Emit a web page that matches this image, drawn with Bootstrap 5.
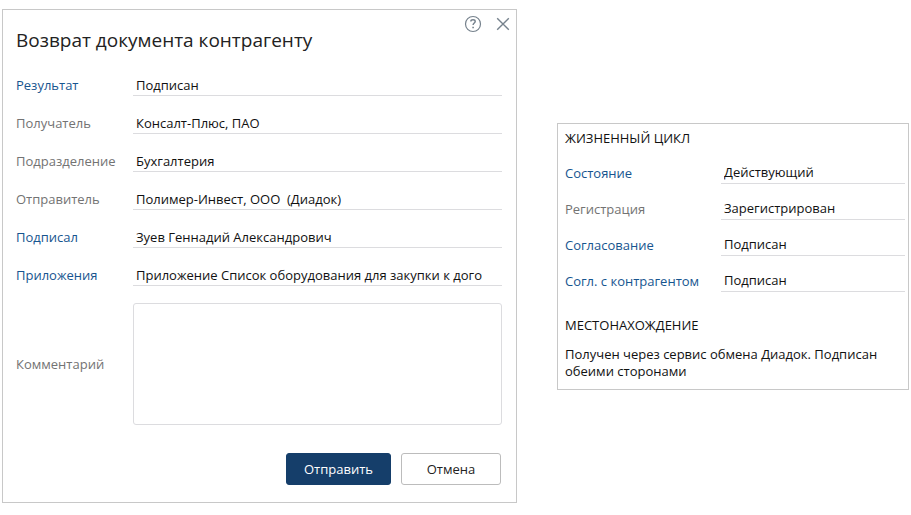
<!DOCTYPE html>
<html lang="ru">
<head>
<meta charset="utf-8">
<meta name="viewport" content="width=device-width, initial-scale=1">
<title>Возврат документа контрагенту</title>
<link href="https://cdn.jsdelivr.net/npm/bootstrap@5.3.0/dist/css/bootstrap.min.css" rel="stylesheet">
<style>
  body { font-family: "Open Sans", "Noto Sans", sans-serif; font-size: 13px; line-height: 20px; color: #111; background: #fff; }
  .page-grid { display: grid; grid-template-columns: 515fr 352fr; gap: 40px; padding: 9px 2px; }
  .panel { border: 1px solid #c8c8c8; background: #fff; }
  .dialog-head { padding: 5px 4px 0 13px; }
  .dialog-title { font-size: 19px; line-height: 28px; padding-top: 11px; color: #222; }
  .head-icons { gap: 12px; }
  .icon-btn { width: 18px; height: 18px; color: #76828d; }
  .icon-btn svg { display: block; }
  .dialog-body { padding: 20px 14px 17px 13px; }
  .stack { display: flex; flex-direction: column; gap: 16px; }
  .stack-side { gap: 14px; }
  .field-row { display: grid; grid-template-columns: 117px minmax(0, 1fr); align-items: center; }
  .stack-side .field-row { grid-template-columns: 156px minmax(0, 1fr); }
  .field-row label { color: #737373; white-space: nowrap; }
  .field-row label.active-label { color: #17558f; }
  .line-input, .line-input:focus { border: 0; border-bottom: 1px solid #dcdcdf; border-radius: 0; padding: 0 3px; height: 22px; min-height: 0; font-size: 13px; line-height: 20px; color: #111; background: transparent; }
  .comment-row { padding-top: 1px; }
  .comment-box { height: 122px; resize: none; border-color: #dcdcdf; border-radius: 3px; font-size: 13px; }
  .actions { margin-top: 28px; gap: 10px; padding-right: 1px; }
  .action-btn { height: 32px; font-size: 13px; line-height: 20px; padding: 0; border-radius: 3px; }
  .send-btn, .send-btn:hover { width: 105px; background: #153e6a; border-color: #153e6a; color: #fff; font-weight: 500; }
  .cancel-btn, .cancel-btn:hover { width: 100px; background: #fff; border-color: #bcbcbc; color: #222; }
  .side-panel { padding: 5px 3px 9px 7px; }
  .section-title { font-size: 13px; line-height: 19px; }
  .place-title { margin: 24px 0 11px; }
  .place-text { line-height: 17px; }
  @media (max-width: 767px) { .page-grid { grid-template-columns: 1fr; } }
</style>
</head>
<body>
<main class="page-grid align-items-center">
  <section class="panel" role="dialog" aria-labelledby="dialogTitle">
    <header class="dialog-head d-flex justify-content-between align-items-start">
      <h1 class="dialog-title fw-normal mb-0" id="dialogTitle">Возврат документа контрагенту</h1>
      <div class="head-icons d-flex">
        <button type="button" class="icon-btn btn p-0 border-0" aria-label="Справка">
          <svg width="18" height="18" viewBox="0 0 18 18" fill="none" stroke="currentColor"><circle cx="9" cy="9" r="7.5" stroke-width="1.2"/><path d="M6.9 6.6V6.2C6.9 5.3 7.8 4.8 9 4.8s2.2.6 2.2 1.7c0 1.5-2.1 1.6-2.1 3.5" stroke-width="1.5"/><path d="M9.1 11.7v1.6" stroke-width="1.6"/></svg>
        </button>
        <button type="button" class="icon-btn btn p-0 border-0" aria-label="Закрыть">
          <svg width="18" height="18" viewBox="0 0 18 18" fill="none" stroke="currentColor" stroke-width="1.4"><path d="M3.2 3.2l11.6 11.6M14.8 3.2L3.2 14.8"/></svg>
        </button>
      </div>
    </header>
    <form class="dialog-body">
      <div class="stack">
        <div class="field-row"><label class="active-label" for="result">Результат</label><input class="form-control line-input" id="result" type="text" value="Подписан"></div>
        <div class="field-row"><label for="recipient">Получатель</label><input class="form-control line-input" id="recipient" type="text" value="Консалт-Плюс, ПАО"></div>
        <div class="field-row"><label for="department">Подразделение</label><input class="form-control line-input" id="department" type="text" value="Бухгалтерия"></div>
        <div class="field-row"><label for="sender">Отправитель</label><input class="form-control line-input" id="sender" type="text" value="Полимер-Инвест, ООО  (Диадок)"></div>
        <div class="field-row"><label class="active-label" for="signer">Подписал</label><input class="form-control line-input" id="signer" type="text" value="Зуев Геннадий Александрович"></div>
        <div class="field-row"><label class="active-label" for="attachments">Приложения</label><input class="form-control line-input" id="attachments" type="text" value="Приложение Список оборудования для закупки к дого"></div>
        <div class="field-row comment-row"><label for="comment">Комментарий</label><textarea class="form-control comment-box" id="comment"></textarea></div>
      </div>
      <div class="actions d-flex justify-content-end">
        <button type="button" class="btn action-btn send-btn">Отправить</button>
        <button type="button" class="btn action-btn cancel-btn">Отмена</button>
      </div>
    </form>
  </section>

  <aside class="panel side-panel">
    <div class="stack stack-side">
      <h2 class="section-title fw-normal mb-0">ЖИЗНЕННЫЙ ЦИКЛ</h2>
      <div class="field-row"><label class="active-label" for="state">Состояние</label><input class="form-control line-input" id="state" type="text" value="Действующий"></div>
      <div class="field-row"><label for="registration">Регистрация</label><input class="form-control line-input" id="registration" type="text" value="Зарегистрирован"></div>
      <div class="field-row"><label class="active-label" for="approval">Согласование</label><input class="form-control line-input" id="approval" type="text" value="Подписан"></div>
      <div class="field-row"><label class="active-label" for="counterparty">Согл. с контрагентом</label><input class="form-control line-input" id="counterparty" type="text" value="Подписан"></div>
    </div>
    <h2 class="section-title place-title fw-normal">МЕСТОНАХОЖДЕНИЕ</h2>
    <p class="place-text mb-0">Получен через сервис обмена Диадок. Подписан обеими сторонами</p>
  </aside>
</main>
<script src="https://cdn.jsdelivr.net/npm/bootstrap@5.3.0/dist/js/bootstrap.bundle.min.js"></script>
</body>
</html>
